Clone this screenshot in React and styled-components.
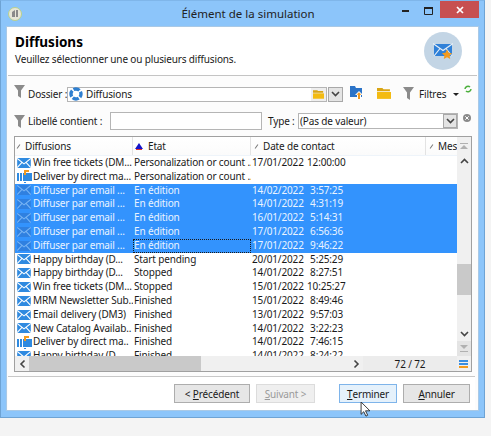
import React from 'react'
import styled, { createGlobalStyle } from 'styled-components'

const GlobalStyle = createGlobalStyle`
html, body { margin: 0; padding: 0; background: #f4f4f4; }
body { font-family: "Noto Sans", "Open Sans", sans-serif; font-size: 10px; letter-spacing: -0.15px; color: #1a1a1a; }
`

const Page = styled.div`
position: relative;
width: 491px;
height: 436px;
overflow: hidden;
background: #f4f4f4;
`

const Window = styled.div`
width: 485px;
height: 418px;
box-sizing: border-box;
display: flex;
flex-direction: column;
background: #8cc5fa;
border: 1px solid #6ea3d4;
border-top-color: #7fb6ea;
padding: 0 5px 6px 5px;
`

const TitleBar = styled.div`
height: 25px;
flex: none;
display: flex;
align-items: center;
`

const AppLogo = styled.div`
width: 14px;
height: 14px;
margin-left: 2px;
border-radius: 50%;
background: #e6e6d8;
border: 1px solid #b9d08c;
box-sizing: border-box;
display: flex;
align-items: center;
justify-content: center;
`

const Title = styled.div`
flex: 1;
text-align: center;
font-size: 11.5px;
letter-spacing: 0;
padding-left: 80px;
color: #222;
`

const WinButtons = styled.div`
display: flex;
align-self: flex-start;
align-items: flex-start;
`

const WinBtn = styled.div`
width: 23px;
height: 19px;
display: flex;
align-items: center;
justify-content: center;
`

const CloseBtn = styled.div`
width: 39px;
height: 17px;
background: #c75050;
color: #fff;
display: flex;
align-items: center;
justify-content: center;
`

const Body = styled.div`
flex: 1;
display: flex;
flex-direction: column;
background: #fff;
border: 1px solid #a9c9e6;
min-height: 0;
`

const Header = styled.div`
height: 48px;
flex: none;
margin: 0 1px;
padding: 0 15px 0 7px;
display: flex;
justify-content: space-between;
align-items: center;
border-bottom: 1px solid #c4c4c4;
`

const HeadTitle = styled.div`
font-size: 13.5px;
font-weight: 700;
letter-spacing: 0;
color: #000;
line-height: 15px;
margin-top: -1px;
`

const HeadSub = styled.div`
line-height: 15px;
margin-top: 2px;
color: #1a1a1a;
`

const Badge = styled.div`
width: 38px;
height: 38px;
border-radius: 50%;
background: #c3d5e5;
display: flex;
align-items: center;
justify-content: center;
`

const Content = styled.div`
flex: 1;
min-height: 0;
display: flex;
flex-direction: column;
padding: 8px 6px 0 7px;
background: #fcfcfc;
`

const FilterRow = styled.div`
display: flex;
align-items: center;
height: ${p => p.$h}px;
flex: none;
margin-bottom: ${p => p.$mb || 0}px;
`

const Label = styled.div`
white-space: nowrap;
flex: none;
width: ${p => (p.$w ? `${p.$w}px` : 'auto')};
margin: 0 ${p => p.$mr || 0}px 0 ${p => p.$ml || 0}px;
`

const Field = styled.div`
box-sizing: border-box;
height: ${p => p.$h || 15}px;
width: ${p => p.$w}px;
flex: none;
display: flex;
align-items: center;
background: #fff;
border: 1px solid #b5b5b5;
margin-right: ${p => p.$mr || 0}px;
`

const FieldText = styled.div`
flex: 1;
padding-left: ${p => p.$pl || 3}px;
display: flex;
align-items: center;
gap: 3px;
white-space: nowrap;
overflow: hidden;
`

const FolderSlot = styled.div`
width: 15px;
height: 13px;
background: #eeeeee;
display: flex;
align-items: center;
justify-content: center;
flex: none;
`

const DropBtn = styled.div`
box-sizing: border-box;
width: ${p => p.$w || 15}px;
height: ${p => p.$h || 15}px;
flex: none;
background: #e4e4e4;
border: 1px solid #a8a8a8;
display: flex;
align-items: center;
justify-content: center;
`

const ToolIcon = styled.div`
display: flex;
flex: none;
align-items: center;
margin-left: ${p => p.$ml || 0}px;
margin-top: ${p => p.$mt || 0}px;
`

const Caret = styled.div`
width: 0;
height: 0;
flex: none;
border-left: 3px solid transparent;
border-right: 3px solid transparent;
border-top: 3px solid #222;
margin: 0 5px 0 7px;
`

const Grid = styled.div`
box-sizing: border-box;
height: 236px;
flex: none;
border: 1px solid #a0a0a0;
display: grid;
grid-template-columns: 1fr 14px;
grid-template-rows: 1fr 15px;
background: #fff;
`

const TableArea = styled.div`
overflow: hidden;
min-width: 0;
display: flex;
flex-direction: column;
`

const HeadRow = styled.div`
display: grid;
grid-template-columns: 118px 118px 175px 32px;
height: 18px;
flex: none;
background: linear-gradient(#fff, #fbfbfb);
border-bottom: 1px solid #eef4fa;
`

const HeadCell = styled.div`
display: flex;
align-items: center;
gap: 4px;
padding-left: ${p => p.$pl ?? 2}px;
overflow: hidden;
white-space: nowrap;
border-right: 1px solid #e3e3e3;
&:last-child { border-right: none; }
`

const SortMark = styled.span`
width: 5px;
height: 1px;
flex: none;
background: #777;
transform: rotate(-55deg);
margin-left: 1px;
`

const SortUp = styled.span`
display: block;
width: 8px;
flex: none;
border-left: 4px solid transparent;
border-right: 4px solid transparent;
border-bottom: 6px solid #1414c8;
box-sizing: border-box;
box-shadow: 0 2px 0 -1px #e03030;
margin-right: 1px;
`

const Row = styled.div`
display: grid;
grid-template-columns: 118px 118px 175px 32px;
height: 13.8px;
line-height: 13.8px;
flex: none;
background: ${p => (p.$sel ? '#3393fd' : '#fff')};
color: ${p => (p.$sel ? '#eaf3ff' : '#1a1a1a')};
white-space: nowrap;
`

const NameCell = styled.div`
display: flex;
align-items: center;
gap: 1px;
padding-left: 1px;
overflow: hidden;
`

const Cell = styled.div`
padding-left: 1px;
overflow: hidden;
box-sizing: border-box;
outline: ${p => (p.$focus ? '1px dotted #1a1a1a' : 'none')};
outline-offset: -1px;
`

const DateCell = styled.div`
display: grid;
grid-template-columns: 55px 36px;
padding-left: 1px;
`

const Time = styled.span`
text-align: right;
white-space: nowrap;
`

const VScroll = styled.div`
background: #f0f0f0;
display: flex;
flex-direction: column;
align-items: center;
`

const ScrollBtn = styled.div`
height: ${p => p.$h || 14}px;
width: ${p => (p.$w ? `${p.$w}px` : '100%')};
flex: none;
display: flex;
align-items: center;
justify-content: center;
background: ${p => p.$bg || 'transparent'};
`

const VThumb = styled.div`
width: 100%;
height: 31px;
margin-top: ${p => p.$top}px;
margin-bottom: auto;
background: #c9c9c9;
`

const HScroll = styled.div`
background: #f0f0f0;
display: flex;
align-items: stretch;
`

const HThumb = styled.div`
width: 172px;
background: #c9c9c9;
`

const HTrack = styled.div`
flex: 1;
`

const Counter = styled.div`
flex: none;
width: 94px;
background: #ececec;
display: flex;
align-items: center;
justify-content: center;
`

const Corner = styled.div`
background: #f0f0f0;
display: flex;
flex-direction: column;
justify-content: center;
gap: 1px;
padding: 0 3px 0 2px;
`

const Line = styled.div`
height: 2px;
background: ${p => p.$c};
`

const Footer = styled.div`
flex: 1;
display: flex;
align-items: center;
margin-top: 4px;
border-top: 1px solid #c8c8c8;
margin-left: -6px;
margin-right: -3px;
background: #fff;
`

const Btn = styled.div`
box-sizing: border-box;
width: ${p => p.$w}px;
height: 19px;
flex: none;
margin-left: ${p => p.$ml}px;
display: flex;
align-items: center;
justify-content: center;
background: ${p => (p.$hot ? '#e5f1fb' : p.$off ? '#efefef' : '#e6e6e6')};
border: 1px solid ${p => (p.$hot ? '#7eb4ea' : p.$off ? '#dcdcdc' : '#adadad')};
color: ${p => (p.$off ? '#9a9a9a' : '#1a1a1a')};
`

const Key = styled.span`
text-decoration: underline;
`

const Cursor = styled.svg`
position: absolute;
left: 360px;
top: 402px;
`

const FilterIcon = () => (
  <svg width="11" height="13" viewBox="0 0 11 13"><path d="M0 0h11L7 5.5V13L4 11V5.5z" fill="#8b8b8b" /></svg>
)

const MailIcon = ({ sel }) => (
  <svg width="14" height="10" viewBox="0 0 15 11" style={{ flex: 'none', marginLeft: 1, marginRight: 1 }}>
    <path d="M0 0h15v11H0z" fill={sel ? '#2f80e0' : '#2f8ae0'} />
    <path d="M0 .5l7.5 6 7.5-6M0 10.5l5.3-5.6M15 10.5L9.7 4.9" fill="none" stroke={sel ? '#78b4f4' : '#fff'} strokeWidth="1.2" />
  </svg>
)

const DirectIcon = () => (
  <svg width="15" height="13" viewBox="0 0 15 13" style={{ flex: 'none', marginLeft: 1 }}>
    <path d="M0 3h2v8H0zM3 3h2v8H3zM6 3h9v8H6z" fill="#2f8ae0" />
    <path d="M7 0h5v2h-3v3H7z" fill="#f29a1f" />
    <path d="M7 12h2v1H7z" fill="#2f8ae0" />
  </svg>
)

const FolderIcon = ({ w = 13, h = 10 }) => (
  <svg width={w} height={h} viewBox="0 0 13 10">
    <path d="M0 0h5l1 1h6v2H0z" fill="#d9a514" />
    <path d="M0 3.6h13V10H0z" fill="#f3bb12" />
  </svg>
)

const turns = { down: 0, up: 180, left: 90, right: -90 }

const Chevron = ({ dir = 'down', c = '#444' }) => (
  <svg width="9" height="6" viewBox="0 0 9 6" style={{ transform: `rotate(${turns[dir]}deg)` }}>
    <path d="M1 1l3.5 3.5L8 1" fill="none" stroke={c} strokeWidth="1.6" />
  </svg>
)

const rows = [
  { name: 'Win free tickets (DM...', state: 'Personalization or count ..', date: '17/01/2022', time: '12:00:00' },
  { name: 'Deliver by direct ma...', state: 'Personalization or count ..', direct: true },
  { name: 'Diffuser par email ...', state: 'En édition', date: '14/02/2022', time: '3:57:25', sel: true },
  { name: 'Diffuser par email ...', state: 'En édition', date: '14/01/2022', time: '4:31:19', sel: true },
  { name: 'Diffuser par email ...', state: 'En édition', date: '16/01/2022', time: '5:14:31', sel: true },
  { name: 'Diffuser par email ...', state: 'En édition', date: '17/01/2022', time: '6:56:36', sel: true },
  { name: 'Diffuser par email ...', state: 'En édition', date: '17/01/2022', time: '9:46:22', sel: true, focus: true },
  { name: 'Happy birthday (D...', state: 'Start pending', date: '20/01/2022', time: '5:25:29' },
  { name: 'Happy birthday (D...', state: 'Stopped', date: '14/01/2022', time: '8:27:51' },
  { name: 'Win free tickets (DM...', state: 'Stopped', date: '15/01/2022', time: '10:25:27' },
  { name: 'MRM Newsletter Sub..', state: 'Finished', date: '15/01/2022', time: '8:49:46' },
  { name: 'Email delivery (DM3)', state: 'Finished', date: '13/01/2022', time: '9:57:03' },
  { name: 'New Catalog Availab..', state: 'Finished', date: '14/01/2022', time: '3:22:23' },
  { name: 'Deliver by direct ma..', state: 'Finished', date: '14/01/2022', time: '7:46:15', direct: true },
  { name: 'Happy birthday (D..', state: 'Finished', date: '14/01/2022', time: '8:24:22' },
]

export default function App() {
  return (
    <Page>
      <GlobalStyle />
      <Window>
        <TitleBar>
          <AppLogo>
            <svg width="8" height="9" viewBox="0 0 8 9"><path d="M1 8V3l3-2v7zM5 1h2v7H5z" fill="#8a8a8a" /></svg>
          </AppLogo>
          <Title>Élément de la simulation</Title>
          <WinButtons>
            <WinBtn><svg width="7" height="2"><path d="M0 0h7v2H0z" fill="#222" /></svg></WinBtn>
            <WinBtn><svg width="9" height="8"><path d="M.5 1.5h8v6h-8z" fill="none" stroke="#222" /><path d="M0 0h9v2H0z" fill="#222" /></svg></WinBtn>
            <CloseBtn><svg width="8" height="8"><path d="M1 1l6 6M7 1L1 7" stroke="#fff" strokeWidth="1.7" /></svg></CloseBtn>
          </WinButtons>
        </TitleBar>
        <Body>
          <Header>
            <div>
              <HeadTitle>Diffusions</HeadTitle>
              <HeadSub>Veuillez sélectionner une ou plusieurs diffusions.</HeadSub>
            </div>
            <Badge>
              <svg width="20" height="17" viewBox="0 0 20 17">
                <path d="M1 1h18v12H1z" fill="#2f80d8" />
                <path d="M0 .5l10 7 10-7M1 13l6-7.5M19 13l-6-7.5" fill="none" stroke="#e6eef6" strokeWidth="1.2" />
                <path d="M14 6.5l1.6 3.2 3.5.5-2.5 2.4.6 3.4-3.2-1.7-3.2 1.7.6-3.4-2.5-2.4 3.5-.5z" fill="#f39a1e" />
              </svg>
            </Badge>
          </Header>
          <Content>
            <FilterRow $h={20} $mb={8}>
              <ToolIcon $mt={-6}><FilterIcon /></ToolIcon>
              <Label $w={39} $ml={3}>Dossier :</Label>
              <Field $w={260} $mr={1}>
                <FieldText $pl={1}>
                  <svg width="14" height="14" viewBox="0 0 14 14"><circle cx="7" cy="7" r="5" fill="none" stroke="#2f7fd0" strokeWidth="3.4" strokeDasharray="6.3 1.5" strokeDashoffset="3" /></svg>
                  Diffusions
                </FieldText>
                <FolderSlot><FolderIcon w={11} h={9} /></FolderSlot>
              </Field>
              <DropBtn><Chevron /></DropBtn>
              <ToolIcon $ml={7} $mt={-4}>
                <svg width="13" height="13" viewBox="0 0 13 13">
                  <path d="M0 0h5l1 2h6v9H0z" fill="#2c74c8" />
                  <path d="M9 5l4 4h-2v4H7V9H5z" fill="#fff" />
                  <path d="M9 6.2l2.5 2.5H10V13H8V8.7H6.500z" fill="#f29a1f" />
                </svg>
              </ToolIcon>
              <ToolIcon $ml={14} $mt={-2}><FolderIcon w={14} h={11} /></ToolIcon>
              <ToolIcon $ml={12} $mt={-2}><FilterIcon /></ToolIcon>
              <Label $w={27} $ml={5}>Filtres</Label>
              <Caret />
              <svg width="8" height="8" viewBox="0 0 8 8" style={{ marginTop: -10, flex: 'none' }}><path d="M1 4a3 3 0 0 1 5-2M7 4a3 3 0 0 1-5 2" fill="none" stroke="#4caf3c" strokeWidth="1.5" /></svg>
            </FilterRow>
            <FilterRow $h={18} $mb={6}>
              <ToolIcon><FilterIcon /></ToolIcon>
              <Label $w={76} $ml={3} $mr={6}>Libellé contient :</Label>
              <Field $w={152} $h={18} $mr={6} />
              <Label $w={26} $mr={4}>Type :</Label>
              <Field $w={160} $h={16}>
                <FieldText $pl={1}>(Pas de valeur)</FieldText>
                <DropBtn $w={14} $h={14}><Chevron /></DropBtn>
              </Field>
              <svg width="8" height="8" viewBox="0 0 8 8" style={{ marginLeft: 5, marginTop: -6, flex: 'none' }}><circle cx="4" cy="4" r="4" fill="#8a8a8a" /><path d="M2.3 2.3l3.4 3.4M5.7 2.3L2.3 5.7" stroke="#fff" /></svg>
            </FilterRow>
            <Grid>
              <TableArea>
                <HeadRow>
                  <HeadCell $pl={0}><SortMark />Diffusions</HeadCell>
                  <HeadCell><SortUp />Etat</HeadCell>
                  <HeadCell><SortMark />Date de contact</HeadCell>
                  <HeadCell><SortMark />Mes</HeadCell>
                </HeadRow>
                {rows.map((r, i) => (
                  <Row key={i} $sel={r.sel}>
                    <NameCell>
                      {r.direct ? <DirectIcon /> : <MailIcon sel={r.sel} />}
                      {r.name}
                    </NameCell>
                    <Cell $focus={r.focus}>{r.state}</Cell>
                    {r.date ? (
                      <DateCell><span>{r.date}</span><Time>{r.time}</Time></DateCell>
                    ) : <div />}
                    <div />
                  </Row>
                ))}
              </TableArea>
              <VScroll>
                <ScrollBtn $h={18}>
                  <svg width="8" height="7" viewBox="0 0 8 7"><path d="M0 0h8v1H0zM4 2l4 4H0z" fill="#b0b0b0" /></svg>
                </ScrollBtn>
                <ScrollBtn $h={12}><Chevron dir="up" /></ScrollBtn>
                <VThumb $top={97} />
                <ScrollBtn $h={14}><Chevron /></ScrollBtn>
                <ScrollBtn $h={15} $bg="#e4e4e4">
                  <svg width="8" height="7" viewBox="0 0 8 7"><path d="M0 0h8L4 4zM0 6h8v1H0z" fill="#b0b0b0" /></svg>
                </ScrollBtn>
              </VScroll>
              <HScroll>
                <ScrollBtn $h={15} $w={14}><Chevron dir="left" /></ScrollBtn>
                <HThumb />
                <HTrack />
                <ScrollBtn $h={15} $w={14}><Chevron dir="right" /></ScrollBtn>
                <Counter>72 / 72</Counter>
              </HScroll>
              <Corner>
                <Line $c="#3a8ee0" />
                <Line $c="#3a8ee0" />
                <Line $c="#f29a1f" />
              </Corner>
            </Grid>
            <Footer>
              <Btn $w={76} $ml={166}>&lt;&nbsp;<Key>P</Key>récédent</Btn>
              <Btn $w={59} $ml={6} $off><Key>S</Key>uivant &gt;</Btn>
              <Btn $w={58} $ml={24} $hot><Key>T</Key>erminer</Btn>
              <Btn $w={67} $ml={6}><Key>A</Key>nnuler</Btn>
            </Footer>
          </Content>
        </Body>
      </Window>
      <Cursor width="11" height="15" viewBox="0 0 12 17">
        <path d="M1 0v14l3-3 2.5 5 2-1L6 10h5z" fill="#fff" stroke="#222" strokeWidth="1" />
      </Cursor>
    </Page>
  )
}
